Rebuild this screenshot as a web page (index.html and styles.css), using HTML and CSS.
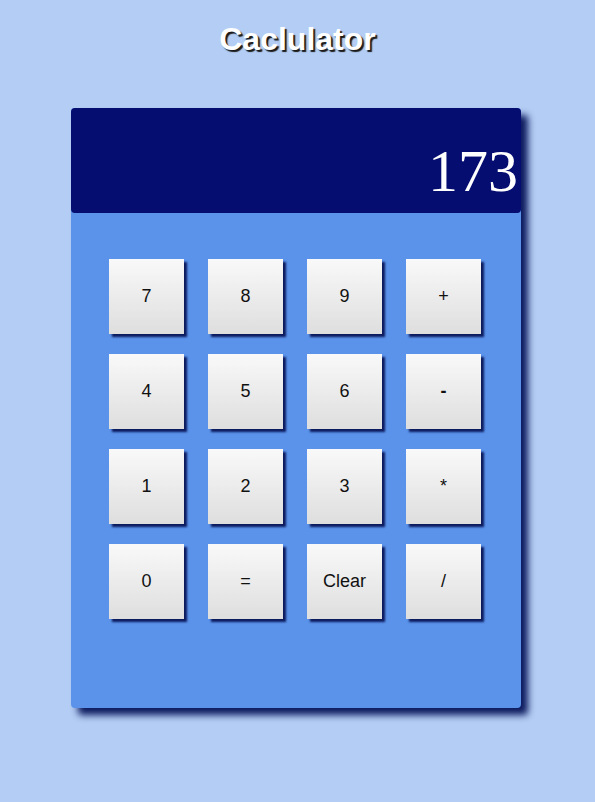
FILE: index.html
```html
<!DOCTYPE html>
<html>
<head>
<meta charset="utf-8">
<title>Caclulator</title>
<link rel="stylesheet" href="styles.css">
</head>
<body>
<h1 class="title">Caclulator</h1>
<div class="calc">
  <div class="display">173</div>
  <div class="keys">
    <button class="key">7</button>
    <button class="key">8</button>
    <button class="key">9</button>
    <button class="key">+</button>
    <button class="key">4</button>
    <button class="key">5</button>
    <button class="key">6</button>
    <button class="key key-bold">-</button>
    <button class="key">1</button>
    <button class="key">2</button>
    <button class="key">3</button>
    <button class="key">*</button>
    <button class="key">0</button>
    <button class="key">=</button>
    <button class="key">Clear</button>
    <button class="key">/</button>
  </div>
</div>
</body>
</html>
```
FILE: styles.css
```css
html, body {
  margin: 0;
  padding: 0;
}
body {
  background: #b3cdf4;
  font-family: "Liberation Sans", Arial, sans-serif;
  width: 595px;
  height: 802px;
  overflow: hidden;
}
.title {
  margin: 0;
  padding-top: 21px;
  text-align: center;
  font-size: 32px;
  font-weight: bold;
  line-height: 36px;
  color: #ffffff;
  text-shadow: 2px 2px 1px #1a1a1a;
}
.calc {
  width: 450px;
  height: 600px;
  margin: 51px 0 0 71px;
  background: #5b93ea;
  border-radius: 4px;
  box-shadow: 7px 7px 7px #0c1a5e;
}
.display {
  height: 105px;
  background: #050d70;
  border-radius: 4px;
  color: #ffffff;
  font-family: "Liberation Serif", "Times New Roman", serif;
  font-size: 60px;
  line-height: 60px;
  text-align: right;
  padding: 33px 3px 0 0;
  box-sizing: border-box;
}
.keys {
  display: grid;
  grid-template-columns: repeat(4, 75px);
  grid-auto-rows: 75px;
  column-gap: 24px;
  row-gap: 20px;
  padding: 46px 0 0 38px;
}
.key {
  width: 75px;
  height: 75px;
  border: none;
  padding: 0;
  margin: 0;
  background: linear-gradient(to bottom, #f9f9f9, #dedede);
  box-shadow: 3px 3px 2px #0c1a5e;
  font-family: "Liberation Sans", Arial, sans-serif;
  font-size: 18px;
  color: #111111;
}
.key-bold {
  font-weight: bold;
}
```
